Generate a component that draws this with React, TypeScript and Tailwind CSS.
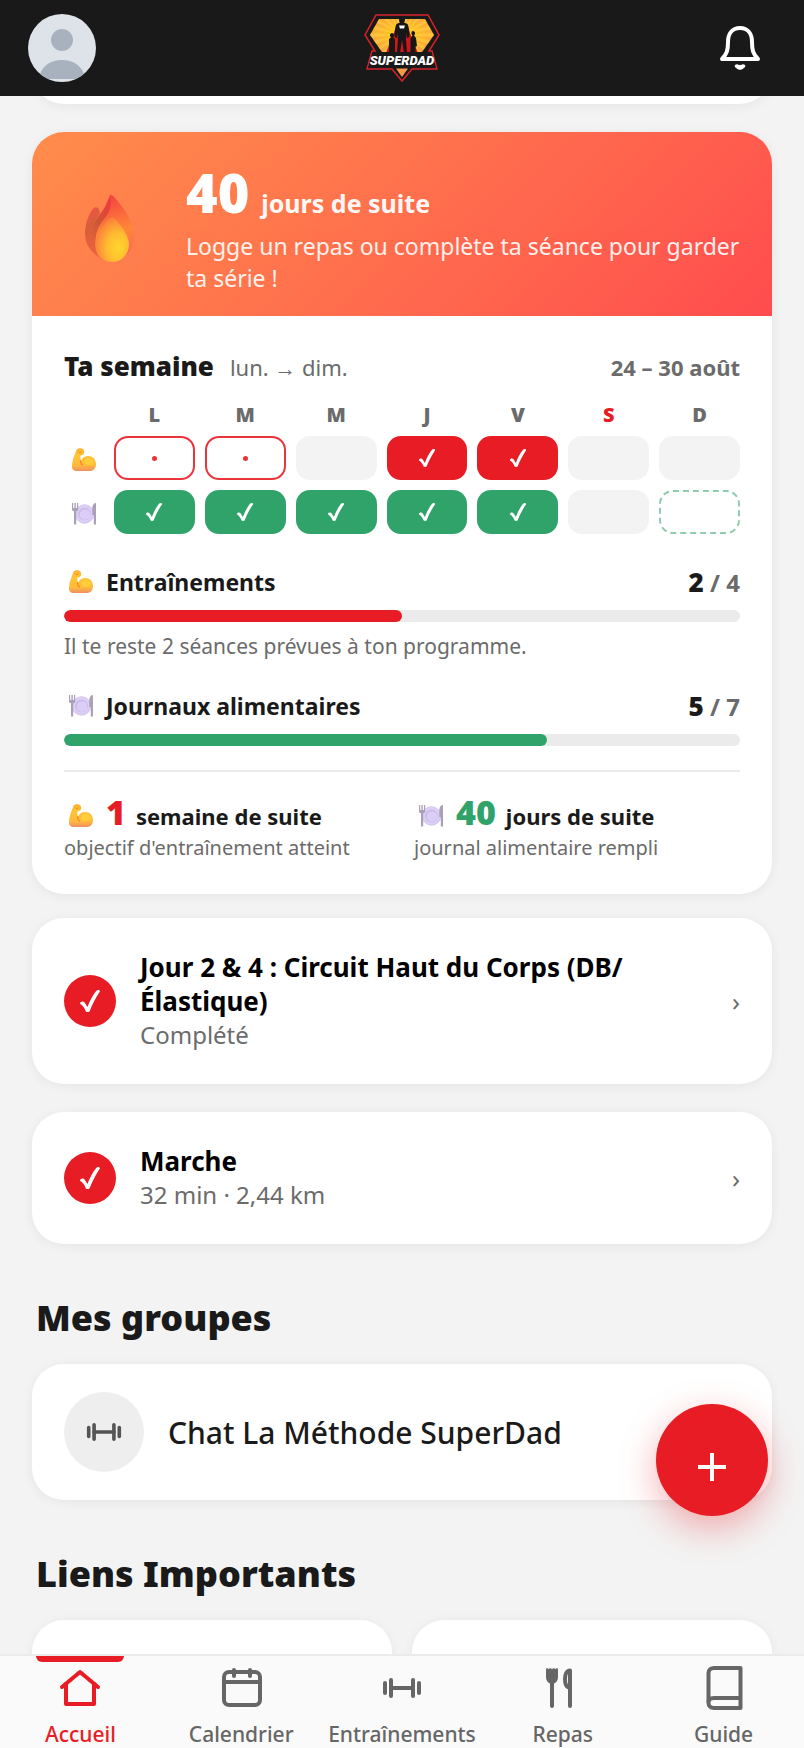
import { Fragment, type ReactNode } from 'react';

type CellState = 'missed' | 'rest' | 'done' | 'planned';

const days = ['L', 'M', 'M', 'J', 'V', 'S', 'D'];
const todayIndex = 5;

const trainingWeek: CellState[] = ['missed', 'missed', 'rest', 'done', 'done', 'rest', 'rest'];
const foodWeek: CellState[] = ['done', 'done', 'done', 'done', 'done', 'rest', 'planned'];

const activities = [
  { title: ['Jour 2 & 4 : Circuit Haut du Corps (DB/', 'Élastique)'], detail: 'Complété' },
  { title: ['Marche'], detail: '32 min · 2,44 km' }
];

function FlameIcon() {
  return (
    <svg viewBox="0 0 56 72" className="h-[72px] w-14 shrink-0" aria-hidden="true">
      <defs>
        <linearGradient id="flame-back" x1="0" y1="0" x2="0.2" y2="1">
          <stop offset="0" stopColor="#f2393f" />
          <stop offset="0.3" stopColor="#f95a3e" />
          <stop offset="0.65" stopColor="#ff8738" />
          <stop offset="1" stopColor="#ff6a55" />
        </linearGradient>
        <linearGradient id="flame-left" x1="0.2" y1="0" x2="0.5" y2="1">
          <stop offset="0" stopColor="#f6504f" />
          <stop offset="0.4" stopColor="#d65f38" />
          <stop offset="1" stopColor="#f0603e" />
        </linearGradient>
        <linearGradient id="flame-fold" x1="0.8" y1="0" x2="0.2" y2="1">
          <stop offset="0" stopColor="#ee3b40" />
          <stop offset="0.5" stopColor="#cc5733" />
          <stop offset="1" stopColor="#ee6340" />
        </linearGradient>
        <radialGradient id="flame-core" cx="0.68" cy="0.68" r="0.7">
          <stop offset="0" stopColor="#ffd62c" />
          <stop offset="0.45" stopColor="#ffbd30" />
          <stop offset="1" stopColor="#fb7d3c" />
        </radialGradient>
      </defs>
      <path d="M28 3c1.500-1 3 .5 5 3 9 10 19 24 19 38 0 15-10 25-23 25S5 59 4 44c-.5-12 3-22 7-27 2-2 5-2 6 1l2 5c4-6 6-14 9-20z" fill="url(#flame-back)" />
      <path d="M11 17c2-2 5-2 6 1 1 4-4 10-7 18-2 7-1 17 5 27C8 59 3 51 3 42c0-11 4-20 8-25z" fill="url(#flame-left)" />
      <path d="M28 4c2 8 1 14-5 22C14 36 11 47 16 65 9 58 6 47 9 38c4-12 14-19 19-34z" fill="url(#flame-fold)" />
      <path d="M30 25c3 0 17 17 17 27 0 11-8 18-17 18s-17-7-17-18c0-11 14-27 17-27z" fill="url(#flame-core)" />
    </svg>
  );
}

function MuscleIcon() {
  return (
    <svg viewBox="0 0 26 26" className="size-[26px] shrink-0" aria-hidden="true">
      <defs>
        <linearGradient id="muscle" x1="0" y1="0" x2="0" y2="1">
          <stop offset="0" stopColor="#ffb02e" />
          <stop offset="0.3" stopColor="#ffc334" />
          <stop offset="0.75" stopColor="#ffbb3b" />
          <stop offset="1" stopColor="#f08f62" />
        </linearGradient>
      </defs>
      <path d="M5.500 3C6 1.500 8 1 10 1.200c2 .3 3.200 1.700 3.200 3.700 0 2-1 3.200-2.700 3.400-.9.100-1.300.8-1.200 1.700l.7 4c1.300-3.300 4-5 7.300-5 4.500 0 7.700 3.400 7.700 8.200 0 4.800-3 6.800-7.500 6.800H6c-3.400 0-5.200-1.800-5-5C1.200 13 4 7 5.500 3z" fill="url(#muscle)" />
      <path d="M9.800 13.500c-.5 2 .2 3.600 1.700 4.500" fill="none" stroke="#f28a2a" strokeWidth="1.200" strokeLinecap="round" />
      <path d="M7.500 4.800c.6 1.200 2.200 1.300 3 .2" fill="none" stroke="#e8912a" strokeWidth="1" strokeLinecap="round" />
      <ellipse cx="18" cy="14.500" rx="4.500" ry="3.500" fill="#ffd23b" opacity=".8" />
    </svg>
  );
}

function PlateIcon() {
  return (
    <svg viewBox="0 0 26 26" className="size-[26px] shrink-0" aria-hidden="true">
      <circle cx="13.500" cy="13" r="9.700" fill="#d5c5f0" />
      <circle cx="13" cy="12.500" r="9" fill="#dccff5" />
      <circle cx="13.500" cy="13" r="6.300" fill="#cbb9ea" />
      <circle cx="14" cy="13.600" r="5.300" fill="#dacdf6" />
      <path d="M1 2h1.200v5h1.200V2h1.400v5H6V2h1.200v6.500c0 1-.8 1.500-2 1.800V23.500H3V10.300C1.800 10 1 9.500 1 8.500z" fill="#aaa0b8" />
      <path d="M25 2v21.500h-2.200V14h-1.500V7c0-3 1.600-5 3.700-5z" fill="#aaa0b8" />
    </svg>
  );
}

function CheckIcon({ className }: { className: string }) {
  return (
    <svg viewBox="0 0 18 20" className={className} fill="currentColor" aria-hidden="true">
      <path d="M.8 12.200c.3-1.900 2.700-2.400 3.900-.7L6.900 15C8.800 9.700 11.300 5.200 14.200 1.600c1-1.100 3.100-.7 2.900.6C13.700 7.300 10.700 12.800 8.700 18.300c-.6 1-2.600 1-3.200 0C4.600 15.900 3.300 13.600.8 12.200z" />
    </svg>
  );
}

function DumbbellIcon({ className }: { className: string }) {
  return (
    <svg viewBox="0 0 40 40" className={className} fill="none" stroke="currentColor" strokeWidth="4" strokeLinecap="round" aria-hidden="true">
      <path d="M3 15v10M9 12v16M31 12v16M37 15v10" />
      <path d="M9 20h22" />
    </svg>
  );
}

function HomeIcon() {
  return (
    <svg viewBox="0 0 44 44" className="size-11" fill="none" stroke="currentColor" strokeWidth="4" strokeLinejoin="round" strokeLinecap="round" aria-hidden="true">
      <path d="M4 21 22 6l18 15" />
      <path d="M8 18v20h28V18" />
    </svg>
  );
}

function CalendarIcon() {
  return (
    <svg viewBox="0 0 44 44" className="size-11" fill="none" stroke="currentColor" strokeWidth="4" strokeLinecap="round" aria-hidden="true">
      <rect x="5" y="6" width="36" height="33" rx="5" />
      <path d="M5 16h36M15 4v6M31 4v6" />
    </svg>
  );
}

function CutleryIcon() {
  return (
    <svg viewBox="0 0 44 44" className="size-11" fill="none" stroke="currentColor" strokeLinecap="round" aria-hidden="true">
      <path d="M5 3.500C5 2 7 2 7.500 3.200 8 2 10 2 11 3.200 12 2 14 2 14.500 3.200 15 2 17 2 17 3.500V11c0 3-1.500 5.500-4 6.500H9C6.500 16.500 5 14 5 11z" fill="currentColor" stroke="none" />
      <path d="M11 16v24" strokeWidth="4" />
      <path d="M29 40V4.500c-3.500 0-5 4.500-5 8.500s1 7.500 3.500 8.500" strokeWidth="4" strokeLinejoin="round" />
    </svg>
  );
}

function BookIcon() {
  return (
    <svg viewBox="0 0 44 44" className="size-11" fill="none" stroke="currentColor" strokeWidth="4" strokeLinejoin="round" aria-hidden="true">
      <path d="M38.500 2H12C9 2 6.500 4 6.500 7v30c0 3 2 5 5.500 5h26.500z" />
      <path d="M6.500 36c0-2.500 2-4 5.500-4h26.500" />
    </svg>
  );
}

function BellIcon() {
  return (
    <svg viewBox="0 0 44 48" className="h-12 w-11" fill="none" stroke="#fff" strokeWidth="4" strokeLinejoin="round" aria-hidden="true">
      <path d="M22 4c-8 0-12 6-12 14 0 8-1 12-6 17h36c-5-5-6-9-6-17 0-8-4-14-12-14z" />
      <path d="M17 41.500c1 5 9 5 10 0-2-1.500-3 0-5 0s-3-1.500-5 0z" fill="#fff" strokeWidth="1" />
    </svg>
  );
}

function Logo() {
  const rays = Array.from({ length: 24 }, (_, i) => i * 15);

  return (
    <svg viewBox="0 0 78 70" className="h-[70px] w-[78px]" role="img" aria-label="SuperDad">
      <defs>
        <radialGradient id="sun" cx="0.5" cy="0.5" r="0.55">
          <stop offset="0" stopColor="#ffd400" />
          <stop offset="0.45" stopColor="#fdb92c" />
          <stop offset="1" stopColor="#f79a45" />
        </radialGradient>
        <clipPath id="shield">
          <path d="M16 6h46l9 16-12 17H19L7 22z" />
        </clipPath>
      </defs>
      <path d="M13 2h52l11 20-10 16h3l5 18H49L39 68 29 56H4l5-18h3L2 22z" fill="#191919" stroke="#d8222a" strokeWidth="1.500" />
      <g clipPath="url(#shield)">
        <rect width="78" height="42" fill="url(#sun)" />
        {rays.map((angle) => (
          <path key={angle} d="M39 22 83 19v6z" fill="#ffd84a" opacity=".45" transform={`rotate(${angle} 39 22)`} />
        ))}
        <path d="M34 12c-3 8-8 20-11 28h32c-3-7-8-20-11-28z" fill="#d4141c" />
        <path d="M39 3c2 0 3 1.500 3 3.500 0 1.300-.4 2.500-1 3l3.500 1.500c1.500 3 2 8 2 13l-2.500 1-.5-5-.5 6 1 14h-3l-2-13-2 13h-3l1-14-.5-6-.5 5-2.500-1c0-5 .5-10 2-13l3.500-1.500c-.6-.5-1-1.700-1-3C36 4.500 37 3 39 3z" fill="#171717" />
        <path d="M29 20c1.300 0 2 1 2 2.200 0 1-.4 1.800-.9 2.200l1.900 1.600v14h-6V26l1.900-1.600c-.5-.4-.9-1.200-.9-2.200 0-1.200.7-2.200 2-2.200zM50 18c1.300 0 2 1 2 2.200 0 1-.4 1.800-.9 2.200L53 25l1 8-1.500.5V40h-5V25l1.900-2.600c-.5-.4-.9-1.200-.9-2.200 0-1.200.2-2.200 1.500-2.200z" fill="#171717" />
        <path d="M36 12.500h6l-1 3h-4z" fill="#fff" />
      </g>
      <path d="M10 39h58l5 16H5z" fill="#191919" />
      <path d="M33 55.500h12L39 64z" fill="#f79a45" />
      <text x="39" y="52" textAnchor="middle" fill="#fff" className="font-['Roboto'] text-[13px] font-black italic">SUPERDAD</text>
    </svg>
  );
}

function DayCell({ state, tone }: { state: CellState; tone: 'red' | 'green' }) {
  if (state === 'done') {
    return (
      <div className={`flex h-11 items-center justify-center rounded-[14px] text-white ${tone === 'red' ? 'bg-[#e81c24]' : 'bg-[#30a36b]'}`}>
        <CheckIcon className="h-5 w-[18px]" />
      </div>
    );
  }
  if (state === 'missed') {
    return (
      <div className="flex h-11 items-center justify-center rounded-[14px] border-2 border-[#ea333a]">
        <span className="size-[5px] rounded-full bg-[#ea333a]" />
      </div>
    );
  }
  if (state === 'planned') {
    return <div className="h-11 rounded-[14px] border-2 border-dashed border-[#8dcdae]" />;
  }
  return <div className="h-11 rounded-[14px] bg-[#f3f3f3]" />;
}

interface GoalProps {
  icon: ReactNode;
  label: string;
  value: number;
  total: number;
  barClass: string;
}

function Goal({ icon, label, value, total, barClass }: GoalProps) {
  return (
    <div>
      <div className="flex h-8 items-center justify-between">
        <div className="flex items-center gap-3 pl-1 text-[23px] font-bold">
          {icon}
          <span>{label}</span>
        </div>
        <div className="text-[24px] font-bold text-[#6b6b6b]">
          <span className="text-[26px] font-black text-[#1a1a1a]">{value}</span> / {total}
        </div>
      </div>
      <div className="mt-3 h-3 overflow-hidden rounded-full bg-[#ebebeb]">
        <div className={`h-full rounded-full ${barClass}`} style={{ width: `${(value / total) * 100}%` }} />
      </div>
    </div>
  );
}

interface StreakProps {
  icon: ReactNode;
  count: number;
  countClass: string;
  unit: string;
  caption: string;
}

function Streak({ icon, count, countClass, unit, caption }: StreakProps) {
  return (
    <div>
      <div className="flex h-11 items-center gap-3 pl-1">
        <span className="mt-2">{icon}</span>
        <div className="flex items-baseline gap-2.5">
          <span className={`text-[34px] leading-11 font-black ${countClass}`}>{count}</span>
          <span className="text-[22px] font-bold">{unit}</span>
        </div>
      </div>
      <p className="text-[20px] leading-7 text-[#6b6b6b]">{caption}</p>
    </div>
  );
}

function WeekCard() {
  return (
    <section className="overflow-hidden rounded-[32px] bg-white shadow-[0_2px_12px_rgba(0,0,0,0.06)]">
      <div className="flex h-[184px] items-center gap-12 bg-linear-135 from-[#ff8c4b] to-[#ff4b4e] pt-2 pr-6 pl-[50px] text-white">
        <FlameIcon />
        <div className="min-w-0 flex-1">
          <div className="flex items-baseline gap-3">
            <span className="text-[54px] leading-[60px] font-black">40</span>
            <span className="text-[25px] font-bold opacity-95">jours de suite</span>
          </div>
          <p className="mt-2 text-[23px] leading-8 opacity-90">
            Logge un repas ou complète ta séance pour garder ta série !
          </p>
        </div>
      </div>

      <div className="px-8 py-8">
        <div className="flex h-9 items-baseline justify-between text-[#6b6b6b]">
          <div className="flex items-baseline gap-4">
            <h2 className="text-[26px] leading-9 font-black text-[#1a1a1a]">Ta semaine</h2>
            <span className="text-[22px]">lun. → dim.</span>
          </div>
          <span className="text-[22px] font-bold">24 – 30 août</span>
        </div>

        <div className="mt-4 grid grid-cols-[40px_repeat(7,1fr)] items-center gap-2.5">
          <span />
          {days.map((day, i) => (
            <span key={i} className={`pt-1 text-center text-[20px] leading-[22px] font-black ${i === todayIndex ? 'text-[#e81c24]' : 'text-[#6b6b6b]'}`}>
              {day}
            </span>
          ))}
          <div className="flex justify-center pt-1"><MuscleIcon /></div>
          {trainingWeek.map((state, i) => (
            <Fragment key={i}><DayCell state={state} tone="red" /></Fragment>
          ))}
          <div className="flex justify-center pt-1"><PlateIcon /></div>
          {foodWeek.map((state, i) => (
            <Fragment key={i}><DayCell state={state} tone="green" /></Fragment>
          ))}
        </div>

        <div className="mt-8">
          <Goal icon={<MuscleIcon />} label="Entraînements" value={2} total={4} barClass="bg-[#e81c24]" />
          <p className="mt-2 text-[21px] leading-8 text-[#6b6b6b]">Il te reste 2 séances prévues à ton programme.</p>
        </div>
        <div className="mt-7">
          <Goal icon={<PlateIcon />} label="Journaux alimentaires" value={5} total={7} barClass="bg-[#30a36b]" />
        </div>

        <div className="mt-6 grid grid-cols-2 gap-6 border-t-2 border-[#ebebeb] pt-[18px]">
          <Streak icon={<MuscleIcon />} count={1} countClass="text-[#e81c24]" unit="semaine de suite" caption="objectif d'entraînement atteint" />
          <Streak icon={<PlateIcon />} count={40} countClass="text-[#30a36b]" unit="jours de suite" caption="journal alimentaire rempli" />
        </div>
      </div>
    </section>
  );
}

function ActivityCard({ title, detail }: { title: string[]; detail: string }) {
  return (
    <a href="#" className="flex items-center gap-6 rounded-[32px] bg-white p-8 shadow-[0_2px_12px_rgba(0,0,0,0.06)]">
      <span className="flex size-[52px] shrink-0 items-center justify-center rounded-full bg-[#e81c24] text-white">
        <CheckIcon className="h-[26px] w-[22px]" />
      </span>
      <span className="min-w-0 flex-1 leading-[34px]">
        <span className="block text-[26px] font-bold text-black">
          {title.map((part, i) => (
            <Fragment key={part}>
              {i > 0 && <wbr />}
              {part}
            </Fragment>
          ))}
        </span>
        <span className="block text-[24px] text-[#6b6b6b]">{detail}</span>
      </span>
      <span className="text-[26px] text-[#6b6b6b]">›</span>
    </a>
  );
}

const navItems = [
  { label: 'Accueil', icon: <HomeIcon />, active: true },
  { label: 'Calendrier', icon: <CalendarIcon />, active: false },
  { label: 'Entraînements', icon: <DumbbellIcon className="mx-0.5 my-0.5 size-10" />, active: false },
  { label: 'Repas', icon: <CutleryIcon />, active: false },
  { label: 'Guide', icon: <BookIcon />, active: false }
];

export default function App() {
  return (
    <div className="flex h-screen flex-col bg-[#f3f3f3] font-['Noto_Sans',sans-serif] text-[#1a1a1a]">
      <header className="grid h-24 shrink-0 grid-cols-3 items-center bg-[#191919] px-7">
        <button type="button" aria-label="Profil" className="size-[68px] overflow-hidden rounded-full">
          <svg viewBox="0 0 68 68" aria-hidden="true">
            <rect width="68" height="68" fill="#dee3ea" />
            <circle cx="34" cy="26" r="11" fill="#a8b2be" />
            <path d="M11 65c1-12 11-19 23-19s22 7 23 19z" fill="#a8b2be" />
          </svg>
        </button>
        <div className="flex justify-center"><Logo /></div>
        <button type="button" aria-label="Notifications" className="mr-3.5 justify-self-end"><BellIcon /></button>
      </header>

      <main className="min-h-0 flex-1 overflow-hidden px-8">
        <div className="-mt-14 h-16 rounded-[32px] bg-white shadow-[0_2px_12px_rgba(0,0,0,0.06)]" />
        <div className="mt-7"><WeekCard /></div>

        <div className="mt-6 space-y-7">
          {activities.map((activity) => (
            <ActivityCard key={activity.detail} {...activity} />
          ))}
        </div>

        <h2 className="mt-12 px-1 text-[36px] leading-[52px] font-black">Mes groupes</h2>
        <a href="#" className="mt-5 flex items-center gap-6 rounded-[32px] bg-white px-8 py-7 shadow-[0_2px_12px_rgba(0,0,0,0.06)]">
          <span className="flex size-20 items-center justify-center rounded-full bg-[#eee] text-[#555]">
            <DumbbellIcon className="size-9" />
          </span>
          <span className="text-[30px] font-medium">Chat La Méthode SuperDad</span>
        </a>

        <h2 className="mt-12 px-1 text-[36px] leading-[52px] font-black">Liens Importants</h2>
        <div className="mt-5 grid grid-cols-2 gap-5">
          <div className="h-40 rounded-[32px] bg-white shadow-[0_2px_12px_rgba(0,0,0,0.06)]" />
          <div className="h-40 rounded-[32px] bg-white shadow-[0_2px_12px_rgba(0,0,0,0.06)]" />
        </div>
      </main>

      <button type="button" aria-label="Ajouter" className="fixed right-9 bottom-[232px] flex size-28 items-center justify-center rounded-full bg-[#e81c24] text-white shadow-[0_12px_36px_rgba(232,28,36,0.35)]">
        <svg viewBox="0 0 32 32" className="mt-3.5 size-8" stroke="currentColor" strokeWidth="4" aria-hidden="true">
          <path d="M2 16h28M16 2v28" />
        </svg>
      </button>

      <nav className="grid h-[94px] shrink-0 grid-cols-5 border-t-2 border-[#ebebeb] bg-[#fafafa]">
        {navItems.map((item) => (
          <a key={item.label} href="#" className={`relative flex flex-col items-center gap-2 pt-2.5 ${item.active ? 'text-[#e81c24]' : 'text-[#666]'}`}>
            {item.active && <span className="absolute top-0 h-1.5 w-22 rounded-b-md bg-[#e81c24]" />}
            {item.icon}
            <span className="text-[21px] leading-8 font-medium">{item.label}</span>
          </a>
        ))}
      </nav>
    </div>
  );
}
